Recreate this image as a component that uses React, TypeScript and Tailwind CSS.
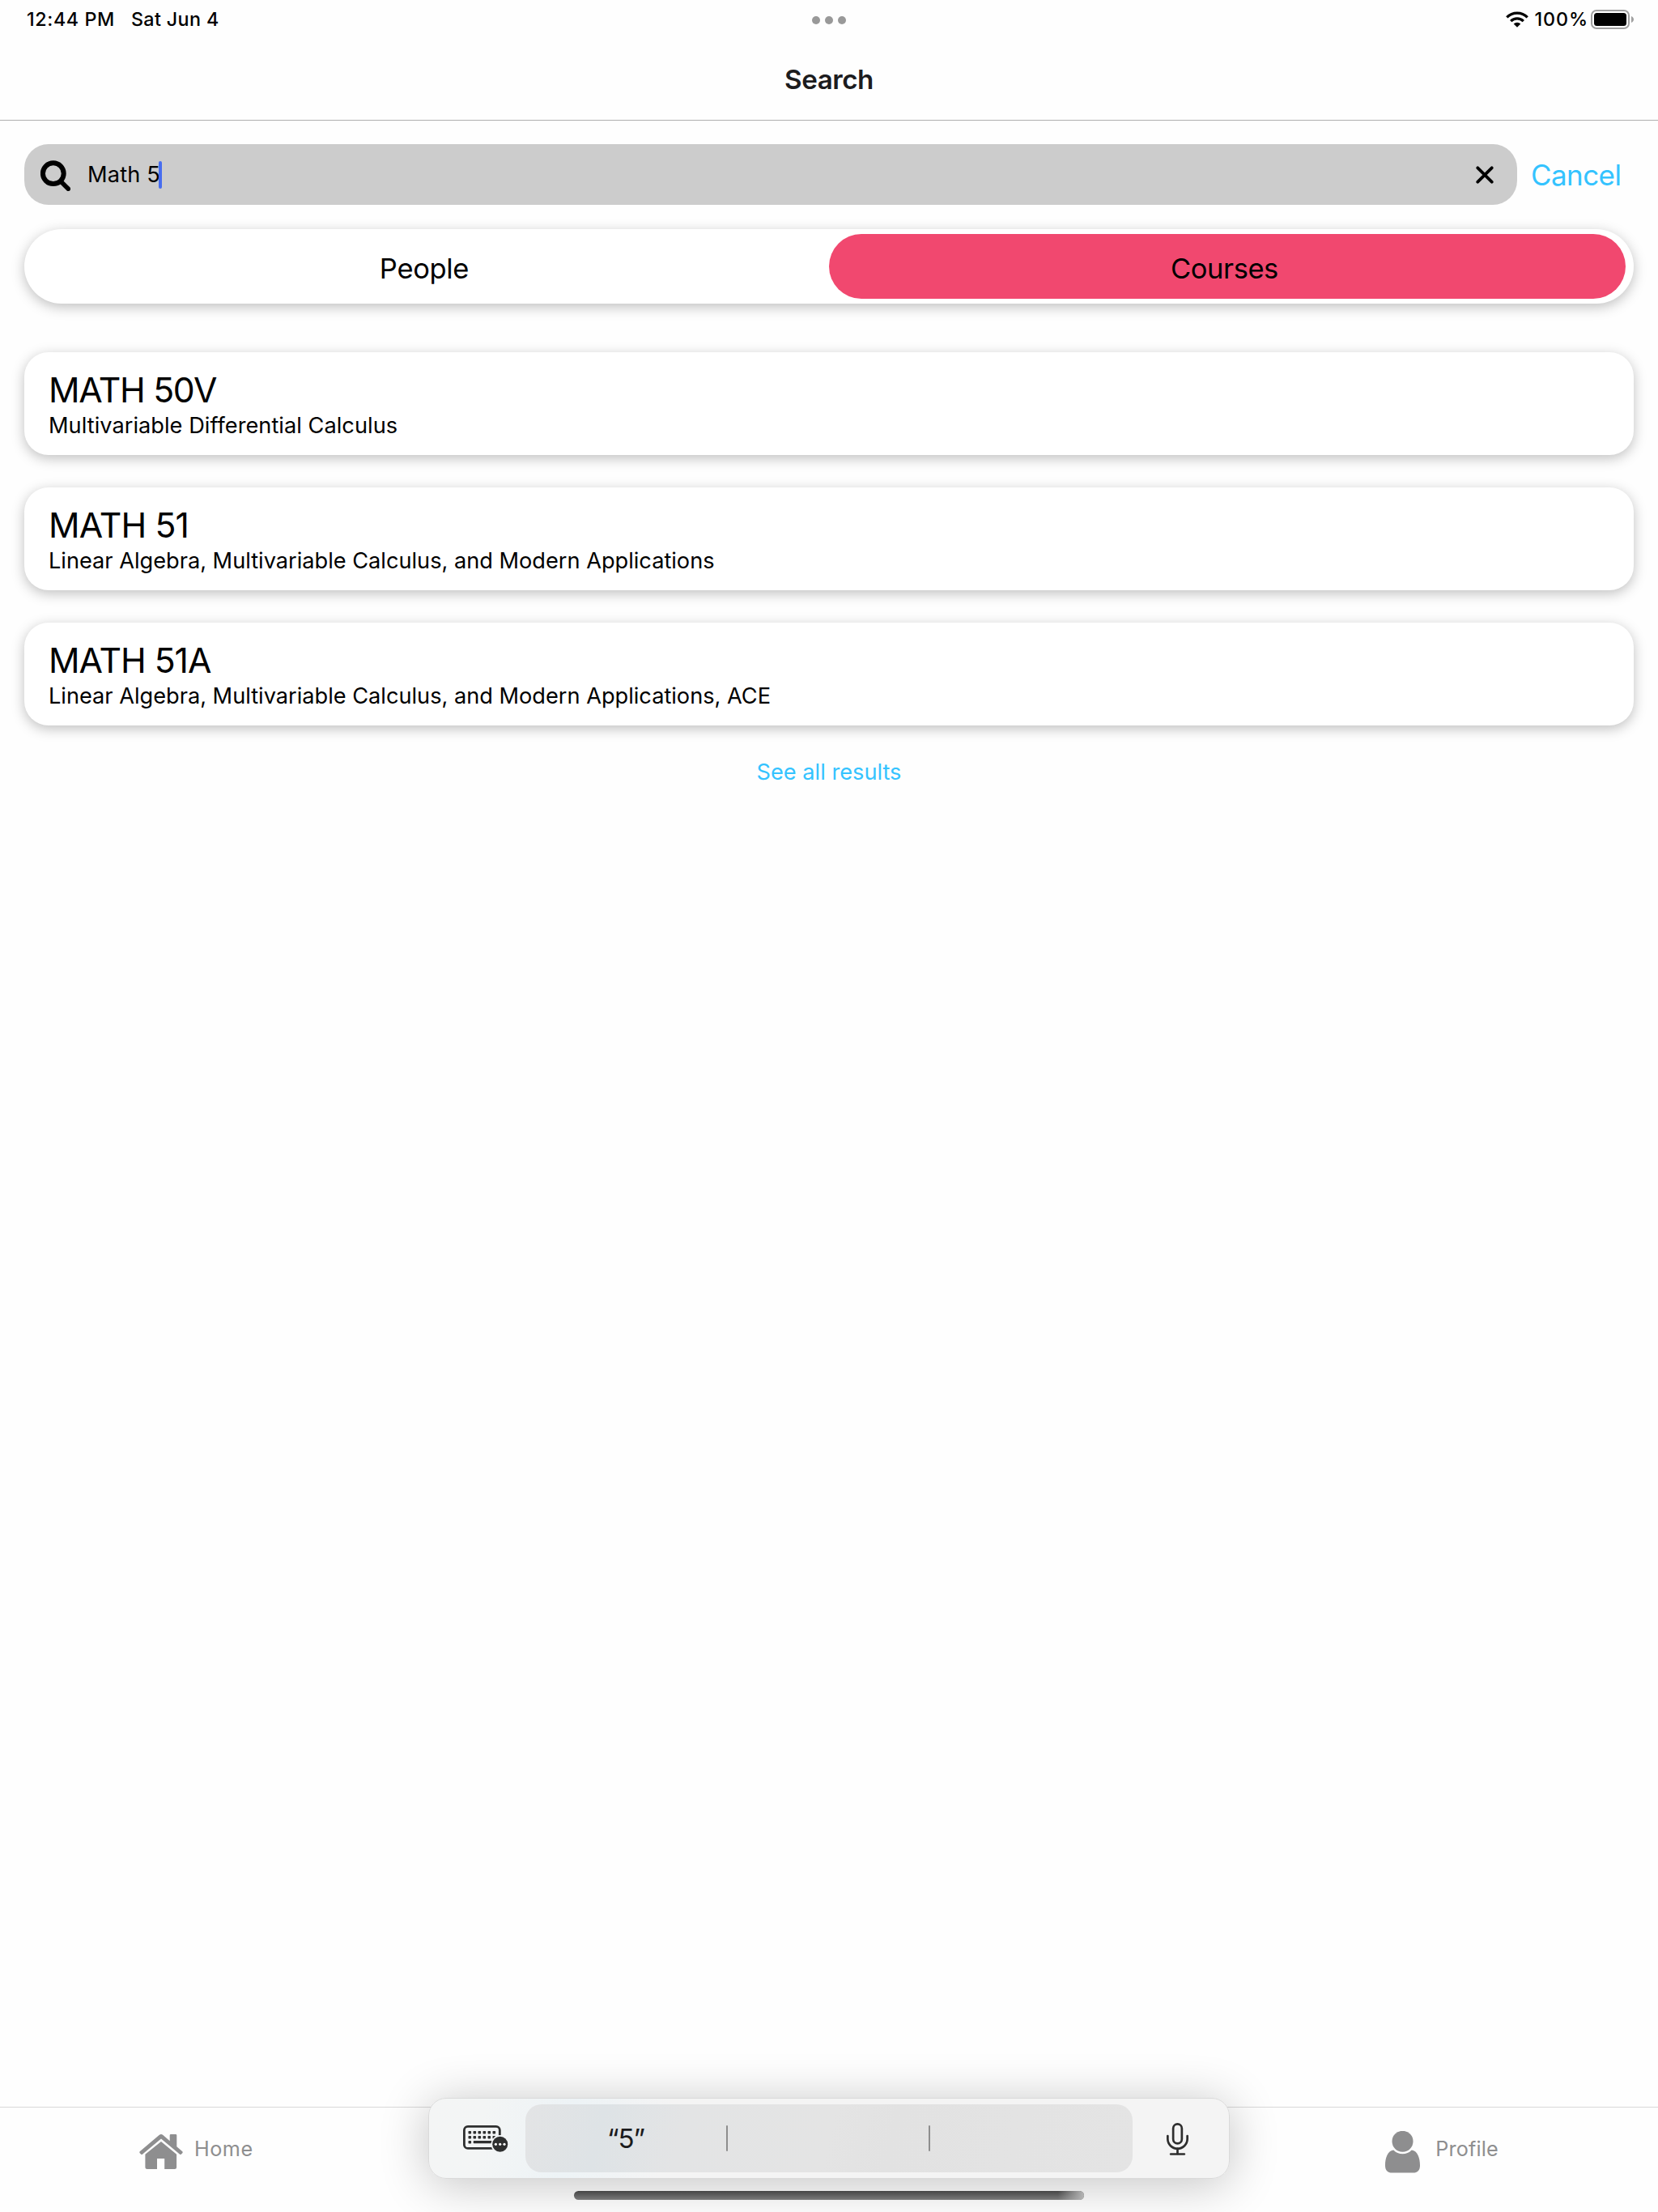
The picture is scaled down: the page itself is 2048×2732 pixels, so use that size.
const courses = [
  { code: "MATH 50V", title: "Multivariable Differential Calculus", track: "tracking-[-1.3px]", sub: "tracking-[0.03px]" },
  { code: "MATH 51", title: "Linear Algebra, Multivariable Calculus, and Modern Applications", track: "tracking-[-0.85px]", sub: "tracking-[-0.01px]" },
  { code: "MATH 51A", title: "Linear Algebra, Multivariable Calculus, and Modern Applications, ACE", track: "tracking-[-1px]", sub: "tracking-[-0.01px]" },
];

function WifiIcon() {
  return (
    <svg width="28" height="20" viewBox="0 0 28 20" fill="none" stroke="#000" strokeWidth="3.3">
      <path d="M1.3 7.4A18 18 0 0 1 26.7 7.4" />
      <path d="M6.2 12.1A11.2 11.2 0 0 1 21.8 12.1" />
      <path d="M14 19.8 9.7 15.6A6.2 6.2 0 0 1 18.3 15.6Z" fill="#000" stroke="none" />
    </svg>
  );
}

function BatteryIcon() {
  return (
    <svg width="53" height="24" viewBox="0 0 53 24" fill="none">
      <rect x="1" y="1" width="46" height="22" rx="6" stroke="#a0a0a0" strokeWidth="2" />
      <rect x="4" y="4" width="40" height="16" rx="3.5" fill="#000" />
      <path d="M50 8c2 .8 3 2.3 3 4s-1 3.200-3 4z" fill="#a0a0a0" />
    </svg>
  );
}

function SearchIcon() {
  return (
    <svg width="37" height="38" viewBox="0 0 37 38" fill="none" stroke="#000">
      <circle cx="15.800" cy="16.200" r="12.900" strokeWidth="6" />
      <path d="M25.500 26.500 34.300 35.200" strokeWidth="5.600" strokeLinecap="round" />
    </svg>
  );
}

function ClearIcon() {
  return (
    <svg width="22" height="22" viewBox="0 0 22 22" fill="none" stroke="#000" strokeWidth="3.800" strokeLinecap="round">
      <path d="M2.300 2.300 19.700 19.700M19.700 2.300 2.300 19.700" />
    </svg>
  );
}

function HomeIcon() {
  return (
    <svg width="54" height="43" viewBox="0 0 54 43" fill="#8e8e8f">
      <path d="M24.600 1.100Q27 -1 29.400 1.100L37.700 8.200V1.300Q37.700 0 39 0H45Q46.300 0 46.300 1.300V15.200L53 21Q54.200 22 53.300 23.200L52 24.600Q51 25.600 49.800 24.600L27 5.600 4.200 24.600Q3 25.600 2 24.600L.7 23.200Q-.2 22 1 21Z" />
      <path d="M27 9 46.100 24.700V40.500Q46.100 43 43.600 43H31.200V30H22V43H9.900Q7.400 43 7.400 40.500V24.700Z" />
    </svg>
  );
}

function ProfileIcon() {
  return (
    <svg width="43" height="52" viewBox="0 0 43 52" fill="#8e8e8f">
      <circle cx="21.500" cy="12.800" r="13" />
      <path d="M10.200 23.600A15.800 15.800 0 0 0 32.800 23.600C40 24.500 43 33.500 43 42.500 43 48.500 40 51.600 34.500 51.600H8.500C3 51.600 0 48.500 0 42.500 0 33.500 3 24.500 10.200 23.600Z" />
    </svg>
  );
}

const keyColumns = [8.3, 14.3, 20.3, 26.3, 32.3, 38.3];

function KeyboardIcon() {
  return (
    <svg width="56" height="33" viewBox="0 0 56 33">
      <rect x="1.400" y="1.400" width="43.900" height="27" rx="4.500" fill="none" stroke="#2e2f2f" strokeWidth="2.800" />
      <g fill="#2e2f2f">
        {keyColumns.map((x) => (
          <rect key={x} x={x - 1.8} y="6.900" width="3.600" height="3.600" rx="0.800" />
        ))}
        {keyColumns.map((x) => (
          <rect key={x} x={x - 1.8} y="12.900" width="3.600" height="3.600" rx="0.800" />
        ))}
        <rect x="6.500" y="18.900" width="3.600" height="3.600" rx="0.800" />
        <rect x="12.700" y="19" width="24" height="3.300" rx="0.800" />
      </g>
      <circle cx="45.700" cy="23.300" r="11.200" fill="#f1f4f5" />
      <circle cx="45.700" cy="23.300" r="9.500" fill="#2e2f2f" />
      <g fill="#fff">
        <circle cx="40.400" cy="23.300" r="1.600" />
        <circle cx="45.700" cy="23.300" r="1.600" />
        <circle cx="51" cy="23.300" r="1.600" />
      </g>
    </svg>
  );
}

function MicIcon() {
  return (
    <svg width="27" height="40" viewBox="0 0 27 40" fill="none" stroke="#2e2e2e" strokeWidth="2.700" strokeLinecap="round">
      <rect x="8.150" y="1.350" width="10.700" height="24" rx="5.350" />
      <path d="M1.350 16V19.800A12.150 11.900 0 0 0 25.650 19.800V16" />
      <path d="M13.500 32V38" />
      <path d="M5.200 38.500H21.800" />
    </svg>
  );
}

function StatusBar() {
  return (
    <div className="grid h-[47px] grid-cols-[1fr_auto_1fr] items-center pr-[30px] pl-[33px] text-[23.3px] leading-[47px] font-medium">
      <div className="flex gap-5">
        <span className="tracking-[0.6px]">12:44 PM</span>
        <span className="tracking-[0.37px]">Sat Jun 4</span>
      </div>
      <div className="-ml-[3px] flex gap-1.5 pt-[3px]">
        <span className="size-2.5 rounded-full bg-[#999]" />
        <span className="size-2.5 rounded-full bg-[#999]" />
        <span className="size-2.5 rounded-full bg-[#999]" />
      </div>
      <div className="flex items-center justify-end">
        <WifiIcon />
        <span className="mr-[3px] ml-2 tracking-[0.9px]">100%</span>
        <BatteryIcon />
      </div>
    </div>
  );
}

function KeyboardBar() {
  return (
    <div className="absolute -top-[12px] left-[529px] flex h-[100px] w-[990px] items-center rounded-[22px] border border-[#dadada] bg-[linear-gradient(100deg,#f4f5f5_0%,#f3f5f5_7%,#edf3f6_18%,#f4f4f4_30%)] shadow-[0_6px_60px_rgba(0,0,0,0.24)]">
      <div className="flex w-[119px] pt-px pl-[42px]">
        <KeyboardIcon />
      </div>
      <div className="flex h-[84px] w-[750px] items-center rounded-[20px] bg-[linear-gradient(105deg,#e3e4e5_0%,#dee3e6_13%,#e3e4e5_26%,#e4e4e4_50%,#e2e2e2_60%,#e4e4e4_100%)]">
        <div className="w-[248px] text-center text-[33px] leading-10 tracking-[-1px] text-[#1b1b1d]">“5”</div>
        <div className="h-8 w-0.5 rounded-full bg-[#8e8e8e]" />
        <div className="w-[248px]" />
        <div className="h-8 w-0.5 rounded-full bg-[#8e8e8e]" />
        <div className="flex-1" />
      </div>
      <div className="flex flex-1 justify-center pr-[9px] pt-0.5">
        <MicIcon />
      </div>
    </div>
  );
}

export default function App() {
  return (
    <div className="flex h-[2732px] w-[2048px] flex-col overflow-hidden bg-[#fefefe] font-['Inter','Liberation_Sans',sans-serif] whitespace-nowrap text-black">
      <StatusBar />
      <header className="flex h-[102px] items-center justify-center border-b border-[#b0b0b0] pt-0.5 text-[33.2px] font-semibold tracking-[-0.48px] text-[#1c1c1e]">
        Search
      </header>

      <main className="flex flex-col px-[30px] pt-[29px]">
        <div className="flex items-center gap-[17px]">
          <div className="flex h-[75px] w-[1844px] items-center rounded-[30px] bg-[#ccc] pr-[29px] pl-5">
            <div className="pt-[3px]">
              <SearchIcon />
            </div>
            <span className="ml-[21px] text-[27.2px] leading-[34px] tracking-[0.15px]">Math 5</span>
            <span className="-ml-[2px] h-[34px] w-1 rounded-full bg-[#476df0]" />
            <div className="ml-auto pt-px">
              <ClearIcon />
            </div>
          </div>
          <span className="text-[35px] leading-10 tracking-[-0.58px] text-[#34c3ff]">Cancel</span>
        </div>

        <div className="mt-[30px] grid h-[92px] grid-cols-2 rounded-[46px] bg-white px-2.5 py-1.5 text-[34.5px] shadow-[0_4px_16px_rgba(0,0,0,0.25)]">
          <div className="flex items-center justify-center pt-[5px] pr-4 tracking-[-0.33px]">People</div>
          <div className="flex items-center justify-center rounded-[40px] bg-[#f1486f] pt-[5px] pr-[7px] tracking-[-0.43px]">Courses</div>
        </div>

        <div className="mt-[60px] flex flex-col gap-10">
          {courses.map((c) => (
            <div key={c.code} className="h-[127px] rounded-[30px] bg-white pt-5 pl-[30px] shadow-[0_4px_16px_rgba(0,0,0,0.25)]">
              <div className={"text-[42.7px] leading-[53px] " + c.track}>{c.code}</div>
              <div className={"pt-px text-[27.2px] leading-[34px] " + c.sub}>{c.title}</div>
            </div>
          ))}
        </div>

        <div className="mt-[41px] text-center text-[27.2px] leading-[34px] text-[#34c3ff]">See all results</div>
      </main>

      <footer className="relative mt-auto flex h-[130px] items-start justify-between border-t border-[#d8d8d8] pr-[197px] pl-[172px] text-[25.2px] leading-[30px] text-[#8e8e8f]">
        <div className="flex items-start gap-3.5 pt-[33px]">
          <HomeIcon />
          <span className="pt-[3px] tracking-[0.5px]">Home</span>
        </div>
        <div className="flex items-start gap-[19px] pt-[29px]">
          <ProfileIcon />
          <span className="pt-[7px] tracking-[0.2px]">Profile</span>
        </div>
        <KeyboardBar />
        <div className="absolute top-[103px] left-[709px] h-[11px] w-[630px] overflow-hidden rounded-full bg-[linear-gradient(to_bottom,#454545,#7a7a7a)]">
          <div className="ml-auto h-full w-8 bg-[linear-gradient(to_right,transparent,#b4b4b4)]" />
        </div>
      </footer>
    </div>
  );
}
